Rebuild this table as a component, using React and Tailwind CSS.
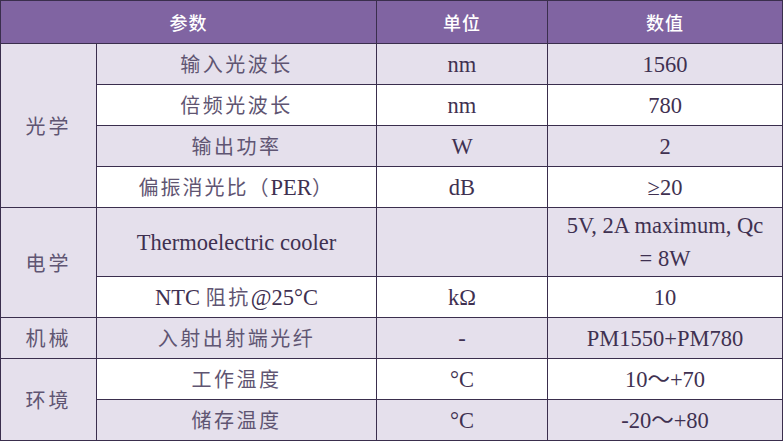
import React from "react";

const LAV = "bg-[#e5e0ec]";
const WHITE = "bg-white";

function CN({ children, className = "" }) {
  return (
    <span
      className={
        "text-[20px] tracking-[2.5px] text-[#5f5572] [font-family:'Noto_Sans_CJK_SC',sans-serif] " +
        className
      }
    >
      {children}
    </span>
  );
}

function Td({ children, bg, rowSpan, className = "" }) {
  return (
    <td
      rowSpan={rowSpan}
      className={
        "border border-[#3a2e4d] text-center align-middle px-[5px] p-0 " +
        bg +
        " " +
        className
      }
    >
      {children}
    </td>
  );
}

export default function App() {
  const rows = [
    { group: "光学", span: 4, name: <CN>输入光波长</CN>, unit: "nm", val: "1560", bg: LAV },
    { name: <CN>倍频光波长</CN>, unit: "nm", val: "780", bg: WHITE },
    { name: <CN>输出功率</CN>, unit: "W", val: "2", bg: LAV },
    {
      name: (
        <>
          <CN className="tracking-[2px]">偏振消光比（</CN>PER<CN>）</CN>
        </>
      ),
      unit: "dB",
      val: "≥20",
      bg: WHITE,
    },
    {
      group: "电学",
      span: 2,
      name: "Thermoelectric cooler",
      unit: "",
      val: "5V, 2A maximum, Qc =\u00a08W",
      bg: LAV,
      h: "h-[69px]",
    },
    {
      name: (
        <>
          NTC <CN className="tracking-[1px]">阻抗</CN>@25°C
        </>
      ),
      unit: "kΩ",
      val: "10",
      bg: WHITE,
    },
    { group: "机械", span: 1, name: <CN>入射出射端光纤</CN>, unit: "-", val: "PM1550+PM780", bg: LAV },
    { group: "环境", span: 2, name: <CN>工作温度</CN>, unit: "°C", val: "10～+70", bg: WHITE },
    { name: <CN>储存温度</CN>, unit: "°C", val: "-20～+80", bg: LAV },
  ];

  return (
    <div className="w-[784px] h-[444px] bg-white">
      <table className="table-fixed border-collapse w-[782px] text-[22.5px] leading-[33px] text-[#3f3151] [font-family:'Liberation_Serif','Noto_Sans_CJK_SC',serif]">
        <colgroup>
          <col className="w-[96px]" />
          <col className="w-[280px]" />
          <col className="w-[171px]" />
          <col className="w-[235px]" />
        </colgroup>
        <thead>
          <tr className="h-[43px] bg-[#8064a2] text-white text-[18px] font-medium tracking-[1px] [font-family:'Noto_Sans_CJK_SC',sans-serif]">
            <th colSpan={2} className="border border-[#3a2e4d] font-medium">参数</th>
            <th className="border border-[#3a2e4d] font-medium">单位</th>
            <th className="border border-[#3a2e4d] font-medium">数值</th>
          </tr>
        </thead>
        <tbody>
          {rows.map((r, i) => (
            <tr key={i} className={r.h || "h-[41px]"}>
              {r.group && (
                <Td bg={LAV} rowSpan={r.span}>
                  <CN className="tracking-[3px]">{r.group}</CN>
                </Td>
              )}
              <Td bg={r.bg}>{r.name}</Td>
              <Td bg={r.bg}>{r.unit}</Td>
              <Td bg={r.bg}>{r.val}</Td>
            </tr>
          ))}
        </tbody>
      </table>
    </div>
  );
}
